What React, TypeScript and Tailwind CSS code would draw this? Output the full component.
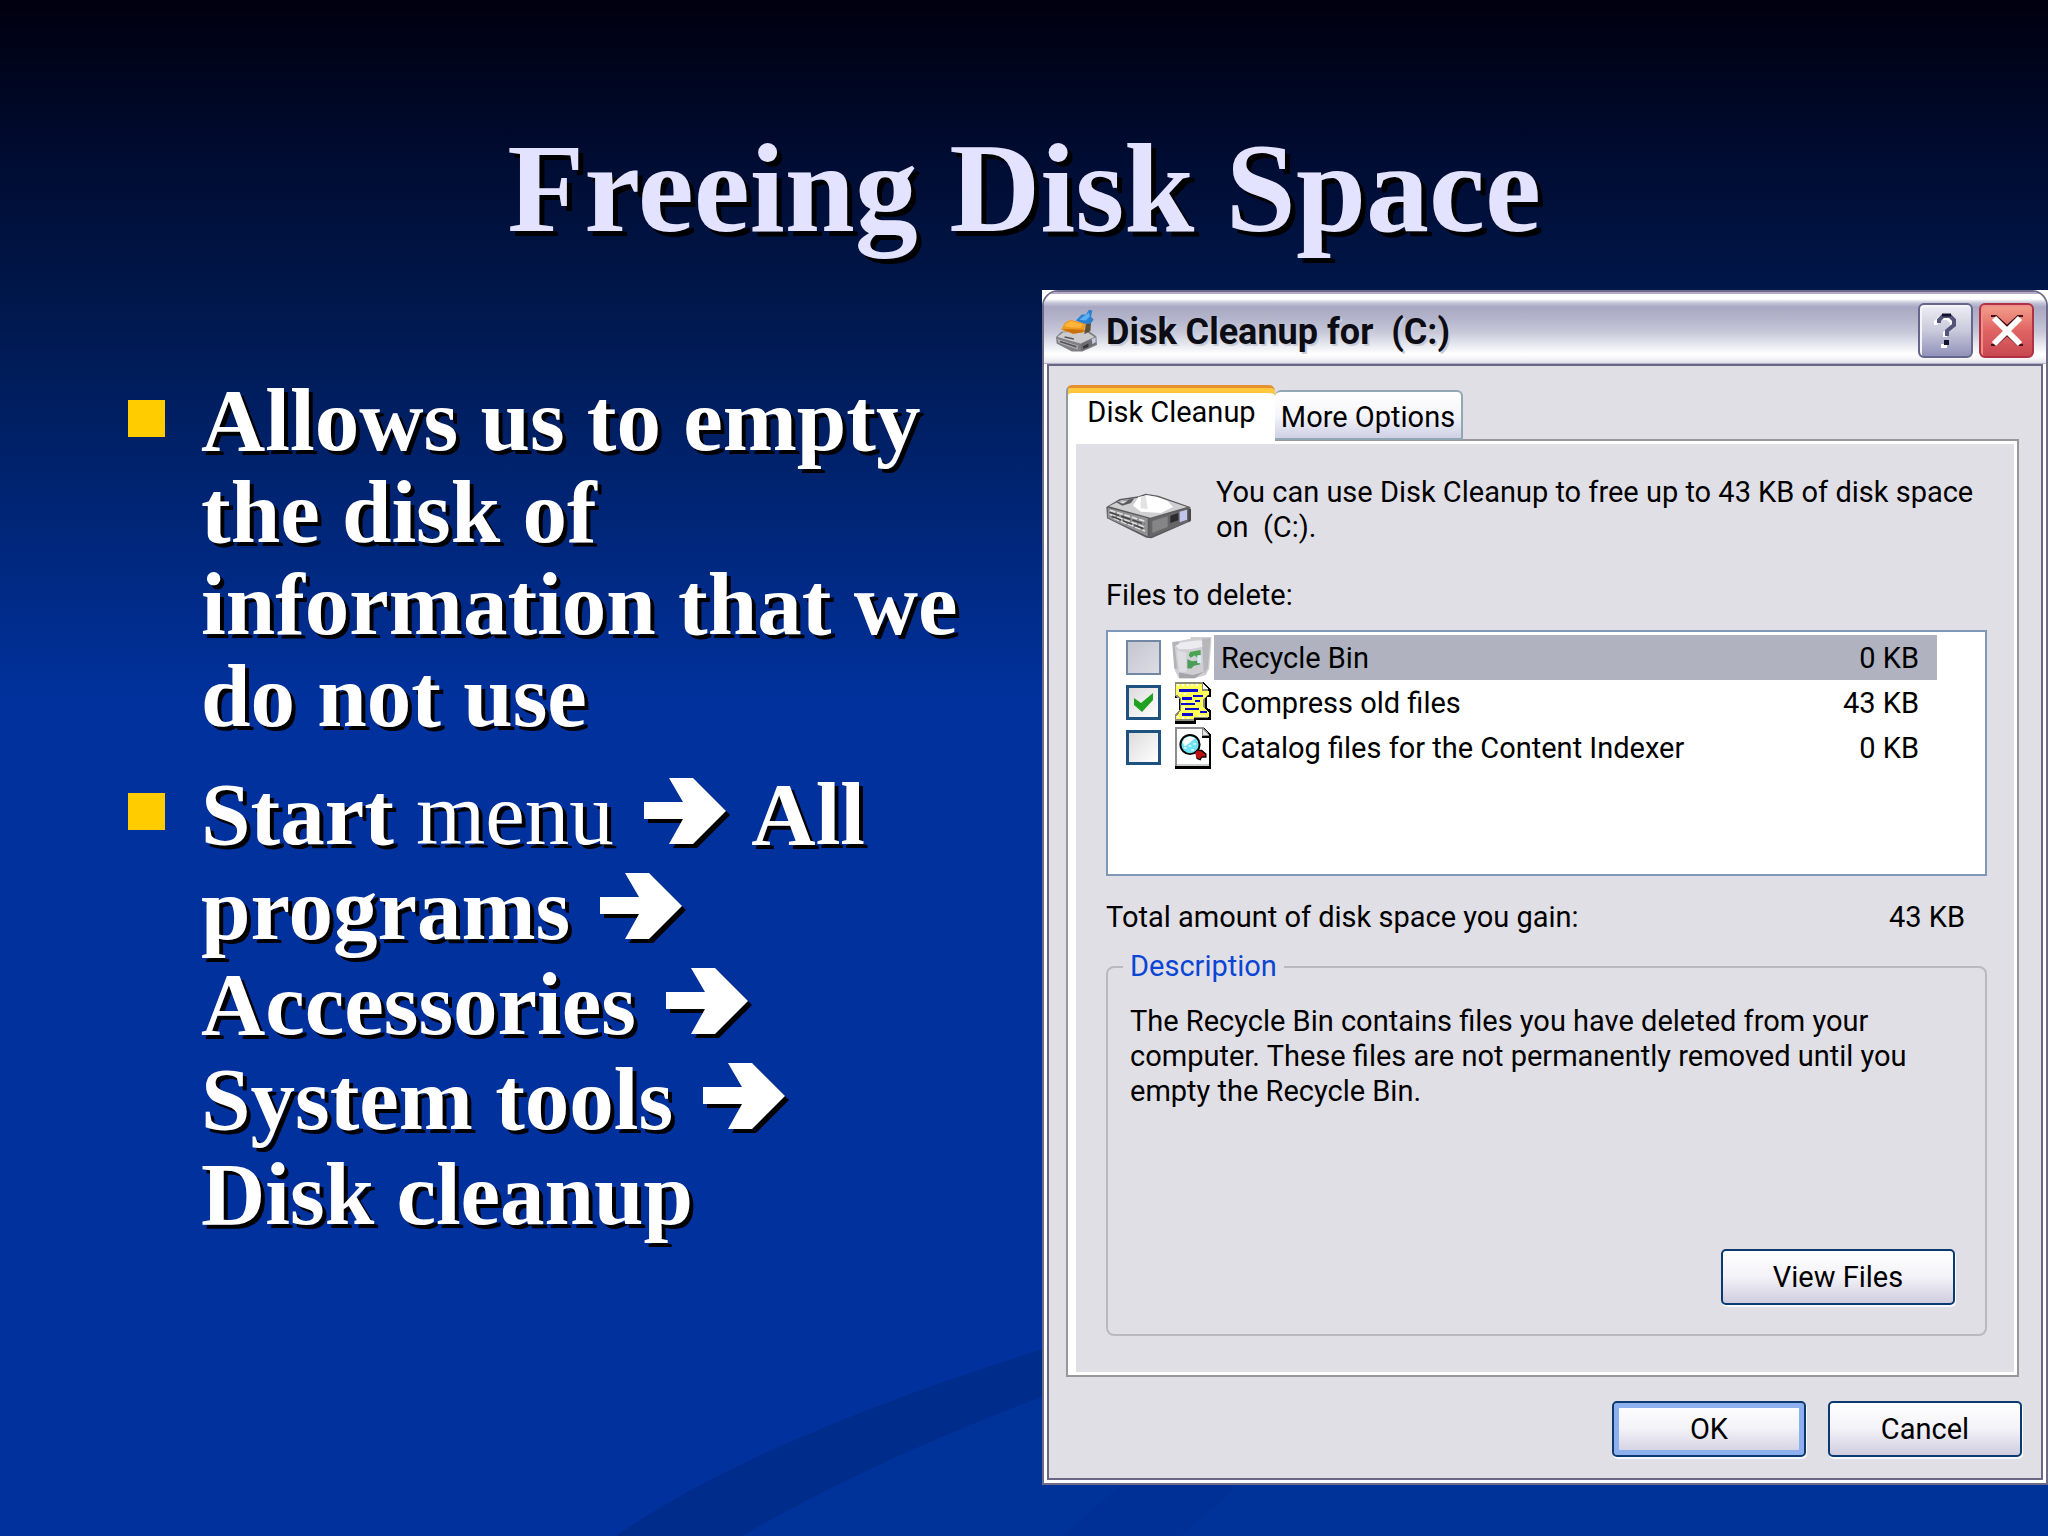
import React, { useState } from "react";

const Arrow: React.FC = () => (
  <svg viewBox="0 0 82 66" className="mx-2 inline-block h-[66px] w-[82px] overflow-visible align-baseline" aria-label="then">
    <path d="M4 28H43L29 4H53L86 37L53 70H29L43 45H4Z" fill="#000" />
    <path d="M0 24H39L25 0H49L82 33L49 66H25L39 41H0Z" fill="#fff" />
  </svg>
)

const CleanupIcon: React.FC = () => (
  <svg viewBox="15 22 130 132" className="h-[44px] w-[43px] shrink-0">
    <path d="M18 106L34 90L112 84L140 104L142 130L98 150L66 150L20 126Z" fill="#808084" />
    <path d="M22 106L40 92L110 90L134 106L92 126Z" fill="#cbcbce" />
    <path d="M22 112L84 132V144L26 124Z" fill="#b0b0b4" />
    <path d="M30 120L80 136M44 106L72 112" stroke="#56565b" strokeWidth="5" />
    <path d="M92 128L138 108V128L94 148Z" fill="#6c6c71" />
    <path d="M100 134L116 126V136L100 142Z" fill="#333338" />
    <path d="M126 112L138 108V122L128 128Z" fill="#c7c9e2" />
    <path d="M108 66L124 62L122 88L104 98Z" fill="#5d5038" />
    <path d="M44 64L62 54L108 66L102 92L70 96L34 84Z" fill="#f09a1c" />
    <path d="M44 68L64 58L100 68L92 78L48 76Z" fill="#ffb43c" />
    <path d="M36 82L102 84L100 92L70 96Z" fill="#c86f10" />
    <path d="M78 56L96 38L108 38L118 24L128 26L124 44L132 54L122 66L104 66Z" fill="#2a80cf" />
    <path d="M88 54L104 42L118 32L120 44L108 56Z" fill="#5fb0f0" />
  </svg>
)

const DriveIcon: React.FC = () => (
  <svg viewBox="165 580 258 138" className="h-[46px] w-[86px] shrink-0">
    <path d="M166 622L206 598L262 590L284 582L322 588L418 622L420 664L302 716L286 714L168 656Z" fill="#5c5c5e" />
    <path d="M174 620L210 602L264 594L286 586L320 592L408 622L298 654Z" fill="#cfcfd1" />
    <path d="M246 618L262 592L288 587L318 592L350 604L366 622L330 640L270 636Z" fill="#fff" />
    <path d="M270 592L284 588L290 628L268 626Z" fill="#e2e2e4" />
    <path d="M196 608L250 596L240 610L214 618Z" fill="#5c5c5f" />
    <path d="M202 606L232 602L216 612Z" fill="#d8d8da" />
    <path d="M170 624L290 656V710L170 654Z" fill="#939396" />
    <path d="M176 632L280 664M176 644L280 682M188 656L282 694" stroke="#dededf" strokeWidth="5" strokeDasharray="18 5" />
    <path d="M176 638L280 673M182 650L280 688" stroke="#48484b" strokeWidth="5" strokeDasharray="30 6" />
    <path d="M296 658L416 624V664L296 712Z" fill="#666669" />
    <path d="M304 664L350 650V682L304 700Z" fill="#858588" />
    <path d="M358 648L382 640V662L358 670Z" fill="#2c2c2e" />
    <path d="M386 636L408 630V660L386 668Z" fill="#c2c4ec" />
    <path d="M412 628H420V662L412 668Z" fill="#48484b" />
  </svg>
)

const RecycleIcon: React.FC = () => (
  <svg viewBox="276 195 120 127" className="h-[42px] w-10 shrink-0">
    <path d="M278 212L300 206L332 200V195H394V212L388 290L378 310L344 320L296 320L284 296Z" fill="#cfcfd3" />
    <path d="M284 218L304 212L340 206L382 204L380 222L330 232L296 232Z" fill="#ececef" />
    <path d="M276 210L296 208V216L284 222L292 292L282 290Z" fill="#b4b4b8" />
    <path d="M290 236L318 242L320 300L298 300Z" fill="#dedee2" />
    <path d="M366 200L392 198L384 288L372 306Z" fill="#b6b6bb" />
    <path d="M296 302L340 310L372 300L344 320L298 320Z" fill="#a4a4a9" />
    <path d="M330 240L362 234V258H352L344 250L332 258L326 250Z" fill="#4aa352" />
    <path d="M322 262L336 268L360 266V278L342 282L334 290L322 290Z" fill="#4a9c56" />
    <path d="M352 250H364V274H352Z" fill="#dbe9f4" />
  </svg>
)

const CompressIcon: React.FC = () => (
  <svg viewBox="276 332 120 127" className="h-[42px] w-10 shrink-0" shapeRendering="crispEdges">
    <path d="M284 332H370L394 354V378H380V410L394 418V448H348V458H284V432H298V380H284Z" fill="#000" />
    <path d="M284 332H370V354H384V374L374 384V408L384 424V440H342V450H284V432L300 416V384L284 374Z" fill="#8a8a78" />
    <path d="M289 337H366V358H386V370L370 384V408L388 424V438H342V444H289V434L304 418V382L289 370Z" fill="#ffff58" />
    <path d="M368 336L386 352H368Z" fill="#fff" />
    <path d="M292 342h6M306 342h6M320 342h6M334 342h6M348 342h6M296 366h6M312 368h6M308 392h6M340 394h6M310 408h6M292 438h6M306 440h6M320 440h6M356 434h6M370 434h6" stroke="#fff" strokeWidth="6" />
    <path d="M298 358H354M338 374H370M306 382H336M346 390H360M304 398H344M316 414H356M360 422H380M306 430H340" stroke="#0a0ad0" strokeWidth="7" />
  </svg>
)

const CatalogIcon: React.FC = () => (
  <svg viewBox="276 467 120 127" className="h-[42px] w-10 shrink-0">
    <g shapeRendering="crispEdges">
      <path d="M284 467H370L394 490V594H284Z" fill="#000" />
      <path d="M284 467H370L388 490V586H284Z" fill="#8d8d90" />
      <path d="M290 472H366V496H386V580H290Z" fill="#fff" />
      <path d="M290 578H386V586H290Z" fill="#c9cdcb" />
      <path d="M370 474L386 490H370Z" fill="#e6e6e6" />
      <path d="M366 496H394" stroke="#000" strokeWidth="6" />
    </g>
    <circle cx="330" cy="520" r="29" fill="#6fe3f2" stroke="#000" strokeWidth="6" />
    <path d="M308 514Q312 498 330 496L346 500L330 514L314 526Z" fill="#fff" />
    <path d="M312 530h8M326 524h8M340 518h8M334 536h8" stroke="#d6fbff" strokeWidth="5" />
    <path d="M346 544L352 536H366L380 548V560H366L362 568L350 564Z" fill="#000" />
    <path d="M346 544L352 538L364 540L376 550V556H364L360 564L350 560Z" fill="#c01010" />
  </svg>
)

const files = [
  { name: "Recycle Bin", size: "0 KB", icon: RecycleIcon, dim: true },
  { name: "Compress old files", size: "43 KB", icon: CompressIcon, dim: false },
  { name: "Catalog files for the Content Indexer", size: "0 KB", icon: CatalogIcon, dim: false },
]

const xpButton = "h-14 rounded-[5px] border-2 border-[#0b3a70] bg-linear-to-b from-white via-[#f3f2f8] to-[#cfcddf] text-center shadow-[1px_2px_0_#f7fbff]"

const CleanupWindow: React.FC = () => {
  const [checked, setChecked] = useState([false, true, false])

  const toggle = (index: number) => {
    setChecked(checked.map((value, i) => (i === index ? !value : value)))
  }

  return (
    <section className="bg-white font-['Roboto',sans-serif] text-[29px] leading-[35px] text-black">
      <div className="overflow-hidden rounded-t-[16px] border-2 border-[#6d6b87]">
        <header className="flex h-[72px] items-center border-t-2 border-b border-t-[#b3a9c6] border-b-[#b4b2c8] bg-[linear-gradient(#fff_0px,#fff_5px,#c4c4d8_9px,#a9a8c3_13px,#b4b5cb_25px,#c6c8d9_38px,#e4e7ee_50px,#fff_60px,#f4f4f8_65px,#dcdbe4_70px)] pt-1 pr-3 pl-[11px]">
          <CleanupIcon />
          <h2 className="ml-2 flex-1 pt-1 text-[36px] font-bold whitespace-pre text-[#0c0c14] [text-shadow:2px_2px_0_#c9cbd8]">Disk Cleanup for  (C:)</h2>
          <div className="flex gap-1.5">
            <button aria-label="Help" className="flex h-[55px] w-[55px] items-center justify-center rounded-[6px] border-2 border-[#66668c] bg-linear-to-b from-[#eeeff5] via-[#c9cadb] to-[#9292ba] shadow-[inset_2px_2px_0_#f4f4fa]">
              <svg viewBox="0 0 24 36" className="h-9 w-6" fill="none">
                <path d="M2 12V9L6 5H14L18 9V14L11 20V24M7 33H13" stroke="#fff" strokeWidth="4" />
                <path d="M5 10V7L9 3H16L20 7V12L13 18V23" stroke="#55557a" strokeWidth="4" />
                <path d="M8 2H17" stroke="#14142e" strokeWidth="3" />
                <path d="M10 27H15V32H10Z" fill="#14142e" />
              </svg>
            </button>
            <button aria-label="Close" className="flex h-[55px] w-[55px] items-center justify-center rounded-[6px] border-2 border-[#b23245] bg-linear-to-b from-[#f2a08c] via-[#e06464] to-[#c84850] shadow-[inset_2px_2px_0_#ee8f88]">
              <svg viewBox="0 0 34 34" className="h-[34px] w-[34px]">
                <path d="M1 2H6L17 12L28 2H33M1 31H6L17 21L28 31H33" stroke="#4a1018" strokeWidth="2" fill="none" />
                <path d="M4 4L30 30M30 4L4 30" stroke="#fff" strokeWidth="6" />
              </svg>
            </button>
          </div>
        </header>
        <div className="bg-white px-[3px] pb-[3px]">
          <div className="border-2 border-[#6a6785] bg-[#e0dfe5] pt-[19px] pr-[19px] pb-[21px] pl-[17px]">
            <div role="tablist" className="relative z-10 -mb-0.5 flex items-end">
              <button role="tab" aria-selected="true" className="h-14 w-[209px] rounded-t-[6px] border-t-[3px] border-l-2 border-[#e6902e] border-l-[#919b9c] bg-white pb-1 shadow-[inset_0_5px_0_#ffc73c]">Disk Cleanup</button>
              <button role="tab" aria-selected="false" className="mb-px h-[50px] w-[188px] rounded-t-[6px] border-2 border-l-0 border-[#91a7b4] bg-linear-to-b from-white via-[#f6f6fb] to-[#cfd0e4] pt-1 text-center">More Options</button>
            </div>
            <div role="tabpanel" className="mr-[3px] border-2 border-[#98989c]">
              <div className="border-[3px] border-l-8 border-white pt-[31px] pr-[27px] pb-[36px] pl-[30px]">
                <div className="flex gap-6">
                  <div className="pt-[18px]">
                    <DriveIcon />
                  </div>
                  <p className="whitespace-pre-wrap">You can use Disk Cleanup to free up to 43 KB of disk space on  (C:).</p>
                </div>
                <p className="mt-[33px]">Files to delete:</p>
                <ul className="mt-[17px] h-[246px] border-2 border-[#7f98b8] bg-white pt-[3px] pr-12 pl-[18px]">
                  {
                    files.map((file, index) => (
                      <li key={file.name}>
                        <label className="flex h-[45px] items-center">
                          <span className="relative h-[35px] w-[35px] shrink-0">
                            <input
                              type="checkbox"
                              checked={checked[index]}
                              onChange={() => toggle(index)}
                              className={file.dim
                                ? "block h-[35px] w-[35px] appearance-none border-2 border-[#7287a6] bg-linear-to-br from-[#c4c6d0] to-[#dcdce4]"
                                : "block h-[35px] w-[35px] appearance-none border-[3px] border-[#1c5180] bg-linear-to-br from-[#dcdcdc] to-white"}
                            />
                            {checked[index] && (
                              <svg viewBox="0 0 20 20" className="pointer-events-none absolute top-2 left-2 h-5 w-5">
                                <path d="M0 5L7 10L19 0V7L8 19L0 12Z" fill="#21a121" />
                              </svg>
                            )}
                          </span>
                          <span className="ml-[11px]">
                            <file.icon />
                          </span>
                          <span className={file.dim
                            ? "ml-0.5 flex h-full flex-1 items-center justify-between bg-[#b0b3bf] pt-0.5 pr-[18px] pl-[7px]"
                            : "ml-0.5 flex h-full flex-1 items-center justify-between pt-0.5 pr-[18px] pl-[7px]"}>
                            <span>{file.name}</span>
                            <span>{file.size}</span>
                          </span>
                        </label>
                      </li>
                    ))
                  }
                </ul>
                <div className="mt-6 flex justify-between pr-[22px]">
                  <span>Total amount of disk space you gain:</span>
                  <span>43 KB</span>
                </div>
                <fieldset className="mt-[14px] rounded-[8px] border-2 border-[#b9b9c1] pr-[30px] pb-[29px] pl-[15px]">
                  <legend className="px-[7px] text-[#0a46d5]">Description</legend>
                  <p className="mt-5 pl-[7px]">The Recycle Bin contains files you have deleted from your computer.  These files are not permanently removed until you empty the Recycle Bin.</p>
                  <div className="mt-[140px] flex justify-end">
                    <button className={`${xpButton} w-[234px]`}>View Files</button>
                  </div>
                </fieldset>
              </div>
            </div>
            <div className="mt-6 flex justify-end gap-[22px]">
              <button className={`${xpButton} w-[194px] inset-shadow-[0_0_0_5px_#8fb0ee]`}>OK</button>
              <button className={`${xpButton} w-[194px]`}>Cancel</button>
            </div>
          </div>
        </div>
      </div>
    </section>
  )
}

const App: React.FC = () => {
  return (
    <main className="relative isolate min-h-screen overflow-hidden bg-[#00319c] bg-[linear-gradient(#00000e_0px,#000b30_150px,#00194f_320px,#00319c_700px)] font-['Liberation_Serif',serif] text-white">
      <svg viewBox="0 0 2048 400" className="absolute bottom-0 left-0 -z-10 w-full">
        <path d="M742 400Q880 320 1060 254L2048 200V400Z" fill="#003399" />
        <path d="M616 400Q760 300 1060 208V254Q880 320 742 400Z" fill="#002c8c" />
        <path d="M1064 400L1130 340H1250L1180 400Z" fill="#003096" />
      </svg>
      <h1 className="pt-[126px] pb-[38px] text-center text-[126px] leading-[126px] font-bold text-[#e3e3ff] [text-shadow:5px_5px_0_#000]">Freeing Disk Space</h1>
      <div className="grid grid-cols-[1042fr_1006fr] items-start">
        <ul className="flex flex-col gap-[25px] pt-[84px] pr-16 pl-32 text-[89px] font-bold [text-shadow:4px_4px_0_#000]">
          <li className="flex gap-9">
            <span className="mt-[26px] h-[37px] w-[37px] shrink-0 bg-[#ffcc00]" />
            <p className="leading-[92px]">Allows us to empty the disk of information that we do not use</p>
          </li>
          <li className="flex gap-9">
            <span className="mt-[26px] h-[37px] w-[37px] shrink-0 bg-[#ffcc00]" />
            <p className="leading-[95px]">
              Start <span className="font-normal">menu</span> <Arrow /> All programs <Arrow /> Accessories <Arrow /> System tools <Arrow /> Disk cleanup
            </p>
          </li>
        </ul>
        <CleanupWindow />
      </div>
    </main>
  )
}
export default App;
